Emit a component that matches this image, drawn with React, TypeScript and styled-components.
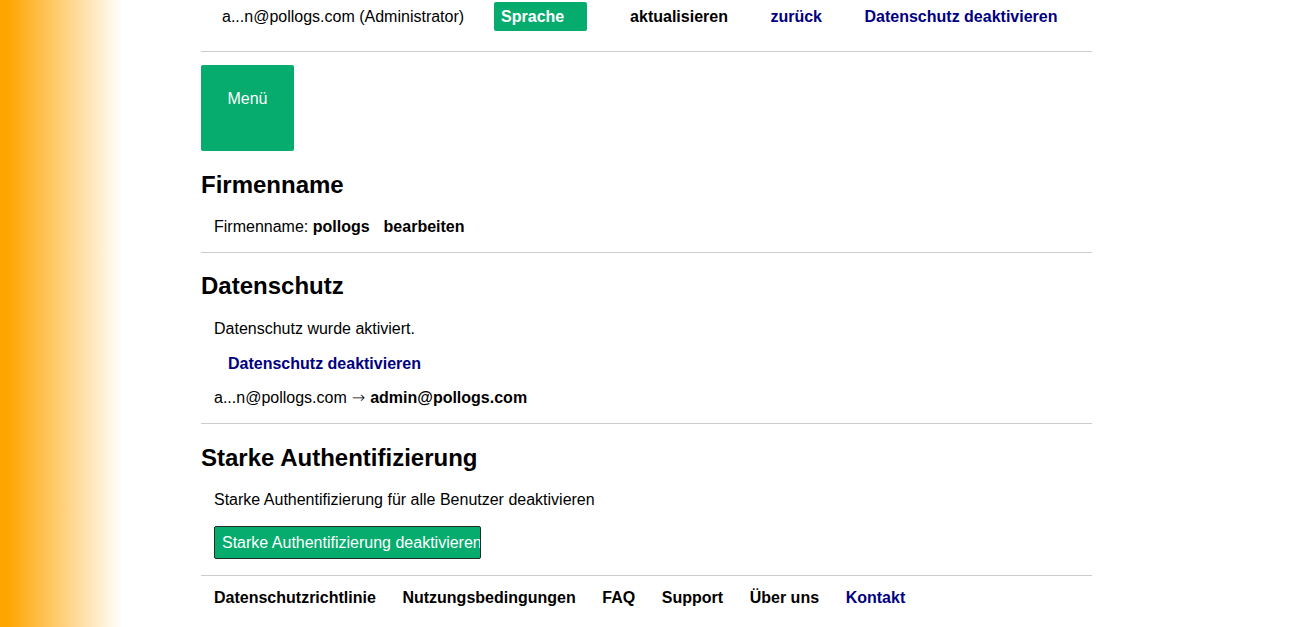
import React from "react";
import styled, { createGlobalStyle } from "styled-components";

const Global = createGlobalStyle`
  html, body { margin: 0; padding: 0; }
  body {
    font-family: "Liberation Sans", Arial, sans-serif;
    font-size: 16px;
    color: #000;
    background: linear-gradient(to right, #ffa500 0px, #ffa500 8px, #ffffff 122px) no-repeat;
    background-size: 122px 100%;
    background-attachment: fixed;
    min-height: 627px;
  }
`;

const Page = styled.div`
  width: 891px;
  margin-left: 201px;
`;

const TopBar = styled.div`
  display: flex;
  align-items: center;
  height: 29px;
  margin-top: 2px;
  padding-left: 21px;
  line-height: 20px;
  white-space: nowrap;
  & > * { flex-shrink: 0; }
`;

const UserLabel = styled.span`
  margin-right: 30px;
  padding-top: 1px;
`;

const LangButton = styled.button`
  width: 93px;
  height: 29px;
  background: #06ab6e;
  color: #fff;
  border: none;
  border-radius: 2px;
  font: bold 16px "Liberation Sans", Arial, sans-serif;
  text-align: left;
  padding: 0 0 0 7px;
  margin-right: 43px;
`;

const TopLink = styled.a<{ $navy?: boolean }>`
  font-weight: bold;
  color: ${(p) => (p.$navy ? "#000080" : "#000")};
  text-decoration: none;
  margin-right: 42.5px;
  padding-top: 1px;
`;

const Rule = styled.hr<{ $top: number }>`
  border: none;
  border-top: 1px solid #cccccc;
  margin: ${(p) => p.$top}px 0 0 0;
  height: 0;
`;

const MenuButton = styled.button`
  width: 93px;
  height: 86px;
  margin-top: 13px;
  background: #06ab6e;
  color: #fff;
  border: none;
  border-radius: 2px;
  font: 16px "Liberation Sans", Arial, sans-serif;
  padding: 25px 0 0 0;
  display: flex;
  justify-content: center;
  align-items: flex-start;
`;

const Heading = styled.h2<{ $top: number }>`
  font-size: 24px;
  line-height: 28px;
  font-weight: bold;
  margin: ${(p) => p.$top}px 0 0 0;
`;

const Line = styled.div<{ $top: number; $indent?: number }>`
  height: 20px;
  line-height: 20px;
  margin-top: ${(p) => p.$top}px;
  padding-left: ${(p) => p.$indent ?? 13}px;
  white-space: nowrap;
`;

const Strong = styled.b<{ $gap?: number }>`
  margin-left: ${(p) => p.$gap ?? 0}px;
`;

const Arrow = styled.span`
  font-family: "DejaVu Sans", sans-serif;
  font-size: 16px;
  font-weight: 300;
  line-height: 0;
  margin: 0 5px;
`;

const NavyLink = styled.a`
  color: #000080;
  font-weight: bold;
  text-decoration: none;
`;

const ActionButton = styled.button`
  display: block;
  margin: 16px 0 0 13px;
  width: 267px;
  height: 33px;
  box-sizing: border-box;
  background: #06ab6e;
  color: #fff;
  border: 1px solid #1f2a24;
  border-radius: 2px;
  font: 16px "Liberation Sans", Arial, sans-serif;
  padding: 0 0 0 7px;
  text-align: left;
  white-space: nowrap;
  overflow: hidden;
`;

const Footer = styled.nav`
  display: flex;
  gap: 26.6px;
  padding-left: 13px;
  margin-top: 12px;
  line-height: 20px;
`;

const FooterLink = styled.a<{ $navy?: boolean }>`
  font-weight: bold;
  color: ${(p) => (p.$navy ? "#000080" : "#000")};
  text-decoration: none;
`;

export default function App() {
  return (
    <>
      <Global />
      <Page>
        <TopBar>
          <UserLabel>a...n@pollogs.com (Administrator)</UserLabel>
          <LangButton>Sprache</LangButton>
          <TopLink>aktualisieren</TopLink>
          <TopLink $navy>zurück</TopLink>
          <TopLink $navy>Datenschutz deaktivieren</TopLink>
        </TopBar>
        <Rule $top={20} />
        <MenuButton>Menü</MenuButton>

        <Heading $top={20}>Firmenname</Heading>
        <Line $top={18}>
          Firmenname: <Strong>pollogs</Strong>
          <Strong $gap={14}>bearbeiten</Strong>
        </Line>
        <Rule $top={15} />

        <Heading $top={19}>Datenschutz</Heading>
        <Line $top={19}>Datenschutz wurde aktiviert.</Line>
        <Line $top={15} $indent={27}>
          <NavyLink>Datenschutz deaktivieren</NavyLink>
        </Line>
        <Line $top={14}>
          a...n@pollogs.com<Arrow>→</Arrow><Strong>admin@pollogs.com</Strong>
        </Line>
        <Rule $top={15} />

        <Heading $top={20}>Starke Authentifizierung</Heading>
        <Line $top={18}>Starke Authentifizierung für alle Benutzer deaktivieren</Line>
        <ActionButton>Starke Authentifizierung deaktivieren</ActionButton>
        <Rule $top={16} />

        <Footer>
          <FooterLink>Datenschutzrichtlinie</FooterLink>
          <FooterLink>Nutzungsbedingungen</FooterLink>
          <FooterLink>FAQ</FooterLink>
          <FooterLink>Support</FooterLink>
          <FooterLink>Über uns</FooterLink>
          <FooterLink $navy>Kontakt</FooterLink>
        </Footer>
      </Page>
    </>
  );
}
